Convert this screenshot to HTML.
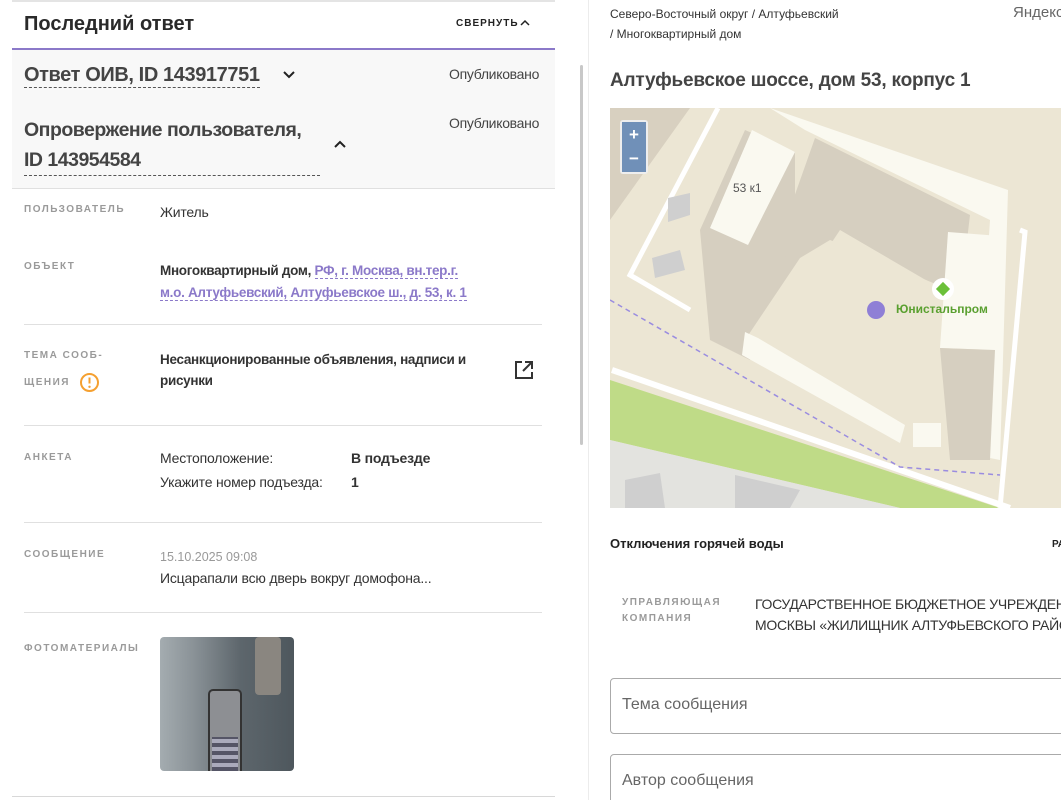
<!DOCTYPE html>
<html><head><meta charset="utf-8"><style>
*{box-sizing:border-box;margin:0;padding:0}
html,body{width:1061px;height:800px;overflow:hidden}
body{background:#fff;font-family:"Liberation Sans",sans-serif;color:#333;position:relative}
.a{position:absolute;white-space:nowrap}
.lbl{font-size:10px;letter-spacing:1.5px;color:#9a9a9a;font-weight:bold}
.hr{position:absolute;left:24px;width:518px;height:1px;background:#e0e0e0}
.v{font-size:14px;color:#333;letter-spacing:-0.2px}
.dash{border-bottom:1px dashed #555}
#r{position:absolute;left:0;top:0;width:1061px;height:800px;overflow:hidden}
</style></head><body>
<div class="a" style="left:12px;top:0;width:543px;height:2px;background:#e4e4e4"></div>
<div class="a" style="left:24px;top:13px;font-size:20px;font-weight:bold;color:#2a2a2a">Последний ответ</div>
<div class="a" style="left:456px;top:18px;font-size:10px;font-weight:bold;letter-spacing:1px;color:#222">СВЕРНУТЬ</div>
<svg class="a" style="left:520px;top:19px" width="10" height="8"><path d="M1 6l4-4 4 4" stroke="#222" stroke-width="1.5" fill="none"/></svg>
<div class="a" style="left:12px;top:48px;width:543px;height:2px;background:#8b79c9"></div>
<div class="a" style="left:12px;top:50px;width:543px;height:139px;background:#f8f8f8;border-bottom:1px solid #e0e0e0"></div>
<div class="a dash" style="left:24px;top:63px;font-size:20px;font-weight:bold;color:#444;line-height:24px;letter-spacing:-0.4px">Ответ ОИВ, ID 143917751</div>
<svg class="a" style="left:282px;top:70px" width="14" height="10"><path d="M2 2l5 5 5-5" stroke="#222" stroke-width="2" fill="none"/></svg>
<div class="a" style="left:449px;top:66px;font-size:14px;color:#444;letter-spacing:-0.3px">Опубликовано</div>
<div class="a" style="left:24px;top:115px;font-size:19.5px;font-weight:bold;color:#444;line-height:30px;letter-spacing:-0.5px">Опровержение пользователя,<br><span style="display:inline-block;width:296px;border-bottom:1px dashed #555;line-height:29px">ID 143954584</span></div>
<svg class="a" style="left:333px;top:139px" width="14" height="10"><path d="M2 8l5-5 5 5" stroke="#222" stroke-width="2" fill="none"/></svg>
<div class="a" style="left:449px;top:115px;font-size:14px;color:#444;letter-spacing:-0.3px">Опубликовано</div>

<div class="a lbl" style="left:24px;top:204px">ПОЛЬЗОВАТЕЛЬ</div>
<div class="a v" style="left:160px;top:204px">Житель</div>
<div class="a lbl" style="left:24px;top:261px">ОБЪЕКТ</div>
<div class="a" style="left:160px;top:260px;font-size:13.5px;font-weight:bold;line-height:22px;letter-spacing:-0.3px">Многоквартирный дом, <span class="dash" style="color:#8b79c9;border-color:#8b79c9">РФ, г. Москва, вн.тер.г.</span><br><span class="dash" style="color:#8b79c9;border-color:#8b79c9">м.о. Алтуфьевский, Алтуфьевское ш., д. 53, к. 1</span></div>
<div class="hr" style="top:324px"></div>
<div class="a lbl" style="left:24px;top:350px">ТЕМА СООБ-</div>
<div class="a lbl" style="left:24px;top:377px">ЩЕНИЯ</div>
<svg class="a" style="left:79px;top:372px" width="21" height="21"><circle cx="10.5" cy="10.5" r="8.5" stroke="#f5a030" stroke-width="2" fill="none"/><path d="M10.5 5.5v6" stroke="#f5a030" stroke-width="2"/><circle cx="10.5" cy="14.8" r="1.2" fill="#f5a030"/></svg>
<div class="a" style="left:160px;top:349px;font-size:13.5px;font-weight:bold;line-height:21px;letter-spacing:-0.3px">Несанкционированные объявления, надписи и<br>рисунки</div>
<svg class="a" style="left:513px;top:359px" width="22" height="22"><path d="M9 3H3v16h16v-6M12 3h7v7M19 3l-9 9" stroke="#333" stroke-width="2" fill="none"/></svg>
<div class="hr" style="top:425px"></div>
<div class="a lbl" style="left:24px;top:452px">АНКЕТА</div>
<div class="a v" style="left:160px;top:450px">Местоположение:</div>
<div class="a v" style="left:351px;top:450px;font-weight:bold">В подъезде</div>
<div class="a v" style="left:160px;top:474px">Укажите номер подъезда:</div>
<div class="a v" style="left:351px;top:474px;font-weight:bold">1</div>
<div class="hr" style="top:522px"></div>
<div class="a lbl" style="left:24px;top:549px">СООБЩЕНИЕ</div>
<div class="a" style="left:160px;top:550px;font-size:12.5px;color:#999">15.10.2025 09:08</div>
<div class="a v" style="left:160px;top:570px">Исцарапали всю дверь вокруг домофона...</div>
<div class="hr" style="top:612px"></div>
<div class="a lbl" style="left:24px;top:643px">ФОТОМАТЕРИАЛЫ</div>
<div class="a" style="left:160px;top:637px;width:134px;height:134px;border-radius:4px;overflow:hidden;background:linear-gradient(90deg,#a4acb0 0%,#8a9297 25%,#5d666c 60%,#4e575d 100%)">
<div class="a" style="left:48px;top:52px;width:34px;height:88px;border-radius:5px;background:#8d8f93;border:2px solid #333"></div>
<div class="a" style="left:52px;top:100px;width:26px;height:34px;background:repeating-linear-gradient(0deg,#556 0 4px,#aab 4px 8px)"></div>
<div class="a" style="left:95px;top:0;width:26px;height:58px;border-radius:4px;background:#8a8680"></div>
</div>
<div class="a" style="left:12px;top:796px;width:543px;height:1px;background:#d8d8d8"></div>
<div class="a" style="left:580px;top:65px;width:3px;height:380px;background:#c8c8c8;border-radius:2px"></div>
<div class="a" style="left:588px;top:0;width:1px;height:800px;background:#ececec"></div>

<div id="r">
<div class="a" style="left:610px;top:4px;font-size:12px;color:#333;line-height:20px">Северо-Восточный округ / Алтуфьевский<br>/ Многоквартирный дом</div>
<div class="a" style="left:1013px;top:4px;font-size:15px;color:#666">Яндекс</div>
<div class="a" style="left:610px;top:70px;font-size:19px;font-weight:bold;color:#444;letter-spacing:-0.2px">Алтуфьевское шоссе, дом 53, корпус 1</div>
<svg class="a" style="left:610px;top:108px" width="451" height="400" viewBox="610 108 451 400">
<rect x="610" y="108" width="451" height="400" fill="#ece6d4"/>
<polygon points="610,108 690,108 610,220" fill="#d8d0c0"/>
<polygon points="610,380 610,440 900,508 1000,508" fill="#bfdb87"/>
<polygon points="610,440 610,508 900,508" fill="#e3e3df"/>
<path d="M612,370 L1010,508" stroke="#fff" stroke-width="6"/>
<path d="M610,300 L900,467 L1000,475" stroke="#9a8ce0" stroke-width="1.5" stroke-dasharray="5,4" fill="none"/>
<path d="M718,108 L630,275 L690,310" stroke="#fff" stroke-width="5" fill="none"/>
<path d="M1020,230 L1025,232 L1000,508" stroke="#fff" stroke-width="5" fill="none"/>
<polygon points="770,108 1008,190 1000,460 975,455 990,220 805,130" fill="#faf9f0"/>
<polygon points="815,138 970,215 960,300 840,230 760,350 740,350" fill="#d6cfc0"/>
<polygon points="700,230 745,130 795,152 795,230 750,360 710,340" fill="#d6cfc0"/>
<polygon points="710,228 752,130 795,152 748,245" fill="#faf9f0"/>
<polygon points="800,258 830,240 950,290 935,395 900,400 820,360 745,340" fill="#ece6d4"/>
<polygon points="948,232 1000,236 995,350 940,348" fill="#faf9f0"/>
<polygon points="940,348 995,350 990,460 950,460" fill="#d6cfc0"/>
<polygon points="745,332 758,338 905,425 900,443 742,355" fill="#faf9f0"/>
<rect x="913" y="423" width="28" height="24" fill="#faf9f0"/>
<polygon points="668,198 690,193 690,215 668,222" fill="#cfcfcf"/>
<polygon points="652,258 680,250 685,270 655,278" fill="#cfcfcf"/>
<polygon points="625,480 660,473 665,508 625,508" fill="#cfcfcf"/>
<polygon points="735,475 800,490 790,508 735,508" fill="#cfcfcf"/>
<text x="733" y="192" font-size="12" fill="#555" font-family="Liberation Sans">53 к1</text>
<circle cx="876" cy="310" r="9" fill="#8f7fd6"/>
<circle cx="943" cy="289" r="11" fill="#fff"/>
<rect x="938" y="284" width="10" height="10" fill="#6bc03a" transform="rotate(45 943 289)"/>
<text x="896" y="313" font-size="12" fill="#5aa030" font-weight="bold" font-family="Liberation Sans">Юнистальпром</text>
<rect x="620" y="120" width="28" height="54" rx="3" fill="#eeeeee"/>
<rect x="622" y="122" width="24" height="25" fill="#7090b8"/>
<rect x="622" y="147" width="24" height="25" fill="#7090b8"/>
<text x="634" y="140" font-size="17" fill="#fff" text-anchor="middle" font-weight="bold" font-family="Liberation Sans">+</text>
<text x="634" y="164" font-size="17" fill="#fff" text-anchor="middle" font-weight="bold" font-family="Liberation Sans">−</text>
</svg>
<div class="a" style="left:610px;top:536px;font-size:13px;font-weight:bold;color:#222">Отключения горячей воды</div>
<div class="a" style="left:1052px;top:539px;font-size:10px;font-weight:bold;color:#222">РА</div>
<div class="a lbl" style="left:622px;top:595px;line-height:16px">УПРАВЛЯЮЩАЯ<br>КОМПАНИЯ</div>
<div class="a" style="left:755px;top:594px;font-size:14px;color:#333;line-height:21px;letter-spacing:-0.3px">ГОСУДАРСТВЕННОЕ БЮДЖЕТНОЕ УЧРЕЖДЕНИЕ ГОРОДА<br>МОСКВЫ «ЖИЛИЩНИК АЛТУФЬЕВСКОГО РАЙОНА»</div>
<div class="a" style="left:610px;top:678px;width:470px;height:56px;border:1px solid #aaa;border-radius:4px"></div>
<div class="a" style="left:622px;top:696px;font-size:16px;color:#666">Тема сообщения</div>
<div class="a" style="left:610px;top:754px;width:470px;height:60px;border:1px solid #aaa;border-radius:4px"></div>
<div class="a" style="left:622px;top:772px;font-size:16px;color:#666">Автор сообщения</div>
</div>
</body></html>
